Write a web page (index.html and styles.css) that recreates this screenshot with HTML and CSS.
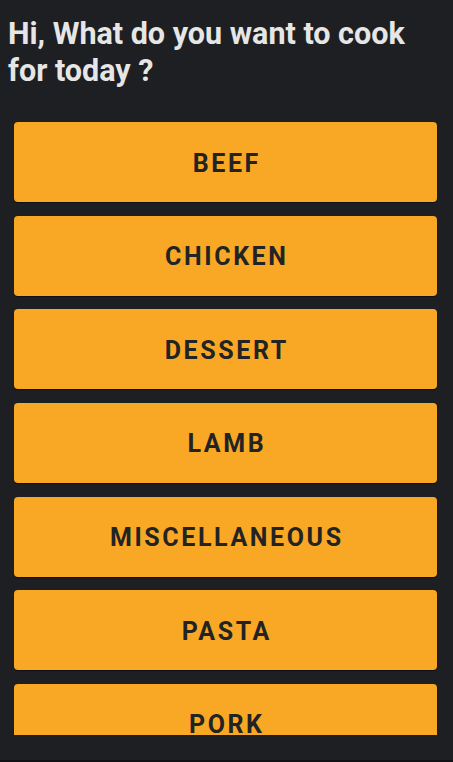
FILE: index.html
```html
<!DOCTYPE html>
<html>
<head>
<meta charset="utf-8">
<link rel="stylesheet" href="styles.css">
</head>
<body>
<div class="screen">
  <h1 class="title">Hi, What do you want to cook for today ?</h1>
  <div class="list">
    <div class="item">BEEF</div>
    <div class="item">CHICKEN</div>
    <div class="item">DESSERT</div>
    <div class="item">LAMB</div>
    <div class="item">MISCELLANEOUS</div>
    <div class="item">PASTA</div>
    <div class="item">PORK</div>
    <div class="item">SEAFOOD</div>
  </div>
  <div class="bottom"></div>
</div>
</body>
</html>
```
FILE: styles.css
```css
html, body {
  margin: 0;
  padding: 0;
  background: #1e1f22;
}
.screen {
  width: 453px;
  height: 762px;
  display: flex;
  flex-direction: column;
  overflow: hidden;
  background: #1e1f22;
}
.title {
  margin: 0;
  padding: 15px 30px 0 8px;
  font-family: Roboto, "Liberation Sans", sans-serif;
  font-weight: 700;
  font-size: 30.5px;
  line-height: 37px;
  color: #e6e6e6;
  box-sizing: border-box;
  flex: 0 0 122px;
}
.list {
  flex: 0 0 613px;
  overflow: hidden;
  display: flex;
  flex-direction: column;
  gap: 13.67px;
  padding: 0 16px 0 14px;
}
.item {
  flex: 0 0 80px;
  box-sizing: border-box;
  background: #f9a825;
  border-radius: 4px;
  box-shadow: 0 1px 1px rgba(0,0,0,0.5);
  display: flex;
  align-items: center;
  justify-content: center;
  padding: 2px 0 0 2.6px;
  font-family: Roboto, "Liberation Sans", sans-serif;
  font-weight: 700;
  font-size: 25px;
  letter-spacing: 2.6px;
  color: #222324;
}
.bottom {
  flex: 1;
  border-bottom: 2px solid #111214;
}
```
